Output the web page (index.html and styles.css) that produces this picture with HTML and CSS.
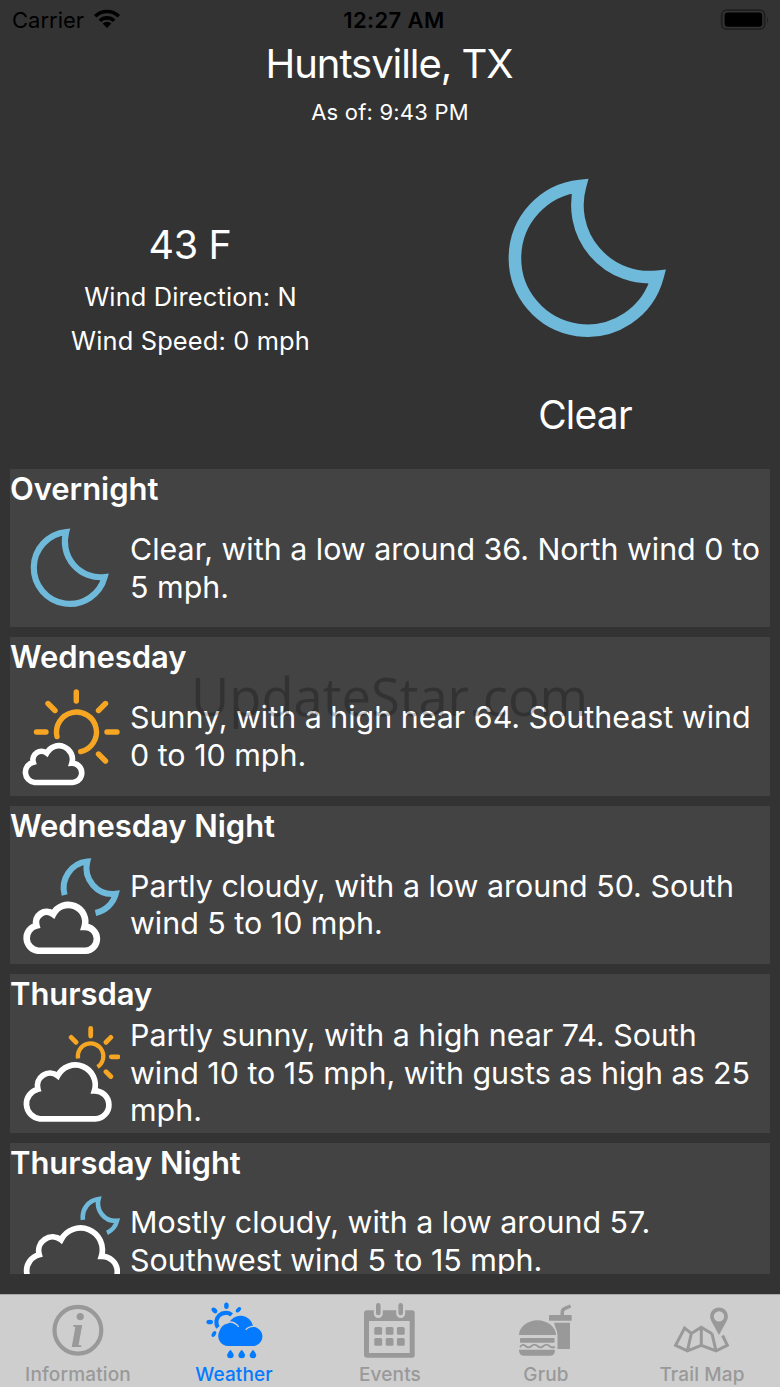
FILE: index.html
```html
<!DOCTYPE html>
<html lang="en">
<head>
  <meta charset="UTF-8" />
  <meta name="viewport" content="width=device-width, initial-scale=1.0" />
  <title>Weather - Huntsville, TX</title>
  <link rel="stylesheet" href="styles.css">
</head>
<body>
  <!-- shared shapes -->
  <svg class="defs" width="0" height="0">
    <defs>
      <path id="moon" d="M71.5 8 A72.5 72.5 0 1 0 149 98.7 A72 72 0 0 1 71.5 8 Z" />
      <path id="cloud" d="M19.5 94.5 A15 15 0 0 1 17.5 65 A12.6 12.6 0 0 1 37.3 51.5 A19.9 19.9 0 0 1 74 66.5 A14 14 0 0 1 75 94.5 Z" />
    </defs>
  </svg>

  <div class="screen">
    <header class="status-bar">
      <div class="carrier">
        <span class="carrier-name">Carrier</span>
        <svg class="wifi" width="28" height="20" viewBox="0 0 28 20">
          <path class="wifi-arc" d="M2.2 7.2 A17 17 0 0 1 25.8 7.2" />
          <path class="wifi-arc" d="M6.8 11.8 A10.4 10.4 0 0 1 21.2 11.8" />
          <path d="M14 19 L9.6 14.6 A6.4 6.4 0 0 1 18.4 14.6 Z" />
        </svg>
      </div>
      <div class="clock">12:27 AM</div>
      <svg class="battery" width="50" height="22" viewBox="0 0 50 22">
        <rect class="battery-case" x="1.7" y="1.2" width="43" height="19" rx="5" />
        <rect x="4.6" y="3.6" width="37.6" height="14.2" rx="3" />
        <path class="battery-tip" d="M47 7.5 Q49.4 10.8 47 14 Z" />
      </svg>
    </header>

    <section class="location">
      <h1>Huntsville, TX</h1>
      <p>As of: 9:43 PM</p>
    </section>

    <section class="current">
      <div class="conditions">
        <div class="temp">43 F</div>
        <div class="wind">Wind Direction: N</div>
        <div class="wind">Wind Speed: 0 mph</div>
      </div>
      <div class="sky">
        <svg class="moon" width="160" height="160" viewBox="-3.5 0 160 160">
          <use href="#moon" stroke-width="12.6" />
        </svg>
        <div class="sky-name">Clear</div>
      </div>
    </section>

    <main class="forecast">
      <article class="card">
        <h2>Overnight</h2>
        <div class="card-body">
          <svg class="icon moon" viewBox="0 0 100 105">
            <use href="#moon" transform="translate(10.6 9) scale(.497)" stroke-width="12.4" />
          </svg>
          <p>Clear, with a low around 36. North wind 0 to<br>5 mph.</p>
        </div>
      </article>

      <article class="card">
        <h2>Wednesday</h2>
        <div class="card-body">
          <svg class="icon" viewBox="0 0 100 105">
            <g class="sun" stroke-width="5.4">
              <path d="M37 49.6 A20 20 0 1 1 60.7 64.6" />
              <path d="M56.3 5V14 M16.5 45H26 M87 45H97 M28 16.5L35 23.5 M85.5 16.5L78.5 23.5 M78.5 67L85.5 74" />
            </g>
            <use class="cloud" href="#cloud" transform="translate(1.3 30.9) scale(.683)" stroke-width="8.2" />
          </svg>
          <p>Sunny, with a high near 64. Southeast wind<br>0 to 10 mph.</p>
        </div>
      </article>

      <article class="card">
        <h2>Wednesday Night</h2>
        <div class="card-body">
          <svg class="icon" viewBox="0 0 100 105">
            <path class="moon" stroke-width="6" d="M44.6 39 A26.5 26.5 0 0 1 67.3 5.6 A26 26 0 0 0 95.8 37.8 A26.5 26.5 0 0 1 75.5 57" />
            <use class="cloud" href="#cloud" transform="translate(1.5 14.2) scale(.852)" stroke-width="7.7" />
          </svg>
          <p>Partly cloudy, with a low around 50. South<br>wind 5 to 10 mph.</p>
        </div>
      </article>

      <article class="card">
        <h2>Thursday</h2>
        <div class="card-body">
          <svg class="icon" viewBox="0 0 100 105">
            <g class="sun butt" stroke-width="4.2">
              <path d="M58 34.5 A12.8 12.8 0 1 1 77.5 43" />
              <path class="ray" d="M70.7 4.5V12 M51.2 13.4L56 18.2 M90.8 13.4L86 18.2 M91.3 32.8H98 M86 47.7L90.8 52.5" />
            </g>
            <use class="cloud" href="#cloud" transform="translate(.4 .3)" stroke-width="5.7" />
          </svg>
          <p>Partly sunny, with a high near 74. South<br>wind 10 to 15 mph, with gusts as high as 25<br>mph.</p>
        </div>
      </article>

      <article class="card">
        <h2>Thursday Night</h2>
        <div class="card-body">
          <svg class="icon" viewBox="0 0 100 105">
            <path class="moon" stroke-width="4.6" d="M63 26.8 A18 18 0 0 1 78.6 6 A17.5 17.5 0 0 0 97 27.8 A18 18 0 0 1 87 39.8" />
            <use class="cloud" href="#cloud" transform="translate(0 -9.8) scale(1.1)" stroke-width="5.2" />
          </svg>
          <p>Mostly cloudy, with a low around 57.<br>Southwest wind 5 to 15 mph.</p>
        </div>
      </article>
    </main>

    <nav class="tab-bar">
      <a class="tab">
        <svg viewBox="0 0 60 60">
          <circle class="line" cx="29.9" cy="30.3" r="23.4" stroke-width="4.2" />
          <text class="info-i" x="22.5" y="46.7">i</text>
        </svg>
        <span>Information</span>
      </a>
      <a class="tab active">
        <svg viewBox="0.3 0 60 60">
          <path class="line" stroke-width="4.2" d="M14.2 27.5 A9.5 9.5 0 0 1 28 14.8" />
          <ellipse cx="22.7" cy="5.7" rx="2.3" ry="3.3" />
          <ellipse cx="10.7" cy="10.4" rx="2.3" ry="3.3" transform="rotate(-45 10.7 10.4)" />
          <ellipse cx="34.7" cy="9.8" rx="1.9" ry="3.2" transform="rotate(45 34.7 9.8)" />
          <ellipse cx="6" cy="22" rx="3.3" ry="2.3" />
          <ellipse cx="10.2" cy="34" rx="1.9" ry="3.2" transform="rotate(30 10.2 34)" />
          <path class="gap-line" d="M26 20 A13 13 0 0 1 49.5 25" stroke-width="3" />
          <path d="M25 23.5 A12.8 12.8 0 0 1 49.3 26 L46 36 H28 Z" />
          <path d="M24.5 46 A10 10 0 0 1 15.6 31.5 A11 11 0 0 1 34.8 27.5 L42 30 A9.6 9.6 0 1 1 48 46 Z" />
          <path class="gap-line" stroke-width="1.4" d="M14.8 30 A11.4 11.4 0 0 1 35 26.8 M42 29.8 A10.4 10.4 0 0 1 50.5 26.4" />
          <path d="M26.7 49.7 Q30 53.5 30 55 A3.3 3.3 0 0 1 23.4 55 Q23.4 53.5 26.7 49.7 Z" />
          <path d="M38 49.7 Q41.3 53.5 41.3 55 A3.3 3.3 0 0 1 34.7 55 Q34.7 53.5 38 49.7 Z" />
          <path d="M49.3 49.7 Q52.6 53.5 52.6 55 A3.3 3.3 0 0 1 46 55 Q46 53.5 49.3 49.7 Z" />
        </svg>
        <span>Weather</span>
      </a>
      <a class="tab">
        <svg viewBox="1 0 60 60">
          <path fill-rule="evenodd" d="M8 10.3H53Q55.7 10.3 55.7 13V55Q55.7 57.7 53 57.7H8Q5 57.7 5 55V13Q5 10.3 8 10.3Z M10 21V53H50.7V21Z" />
          <path class="gap-line round" stroke-width="9" d="M19.3 6V13.5 M41.7 6V13.5" />
          <path class="line round" stroke-width="4.6" d="M19.3 5.2V13 M41.7 5.2V13" />
          <rect x="15.3" y="27" width="7.8" height="7.8" rx="1.5" />
          <rect x="26.7" y="27" width="7.8" height="7.8" rx="1.5" />
          <rect x="37.9" y="27" width="7.8" height="7.8" rx="1.5" />
          <rect x="15.3" y="38" width="7.8" height="7.8" rx="1.5" />
          <rect x="26.7" y="38" width="7.8" height="7.8" rx="1.5" />
          <rect x="37.9" y="38" width="7.8" height="7.8" rx="1.5" />
        </svg>
        <span>Events</span>
      </a>
      <a class="tab">
        <svg viewBox="1 0 60 60">
          <path class="line" stroke-width="3.4" d="M47.2 16V12.5Q47.2 9.4 50 8.3L55.6 6" />
          <rect x="34" y="15" width="22.7" height="5.7" rx=".8" />
          <path d="M39 22.7H55V49H41.7V32Z" />
          <path class="gap-line" stroke-width="3" d="M4 35.5 C4 27 13 20.3 22.5 20.3 S41 27 41 35.5 V54" />
          <path d="M4 35 C4 27 13 20.3 22.5 20.3 S41 27 41 35 Z" />
          <rect x="5" y="38" width="34.6" height="4.8" rx="1" />
          <path class="line" stroke-width="1.8" d="M5 47.3 Q7.5 43.3 10.5 46 T16.5 46 T22.5 46 T28.5 46 T34.5 46 T39.8 46.5" />
          <path d="M4 49.8H40Q40 55.7 35.5 55.7H8.5Q4 55.7 4 49.8Z" />
        </svg>
        <span>Grub</span>
      </a>
      <a class="tab">
        <svg viewBox="1 0 60 60">
          <path class="line" stroke-width="3" d="M41 33.7L30.3 27.3L20.3 33.5L13.6 28L4.6 45.3L16.4 50.8L30.3 45.3L45 50.8L56.4 45.3L51.6 35.5 M20.3 33.5L16.4 50.8 M30.3 27.3V45.3 M41 33.7L45 50.8" />
          <path class="gap-line" stroke-width="2.5" d="M39.8 19L48 35.4L56.2 19" />
          <path fill-rule="evenodd" d="M48 35L40.3 20.9A8.9 8.9 0 1 1 55.7 20.9Z M48 11.2A5.2 5.2 0 1 0 48 21.6A5.2 5.2 0 1 0 48 11.2Z" />
        </svg>
        <span>Trail Map</span>
      </a>
    </nav>

    <div class="watermark">UpdateStar.com</div>
  </div>
</body>
</html>
```
FILE: styles.css
```css
* {
  box-sizing: border-box;
}
body {
  margin: 0;
  background: #333;
  font-family: Inter, 'Liberation Sans', sans-serif;
  color: #fff;
}
h1, h2, p {
  margin: 0;
  font-weight: 400;
}
.defs {
  position: absolute;
}
.screen {
  position: relative;
  width: 780px;
  height: 1387px;
  display: flex;
  flex-direction: column;
  overflow: hidden;
  white-space: nowrap;
}

/* status bar */
.status-bar {
  height: 40px;
  padding: 0 10px 0 12px;
  display: grid;
  grid-template-columns: 1fr auto 1fr;
  align-items: center;
  color: #000;
  font-size: 22px;
}
.carrier {
  display: flex;
  align-items: center;
  gap: 9px;
}
.wifi {
  margin-top: -2px;
}
.wifi-arc {
  fill: none;
  stroke: #000;
  stroke-width: 3.6;
}
.clock {
  padding-left: 6px;
  font-weight: 600;
  letter-spacing: 0.4px;
}
.battery {
  justify-self: end;
  margin-top: -1px;
}
.battery-case {
  fill: none;
  stroke: #202020;
  stroke-width: 1.8;
}
.battery-tip {
  fill: #202020;
}

/* current weather */
.location {
  height: 100px;
  text-align: center;
}
.location h1 {
  padding-right: 2px;
  font-size: 40px;
  line-height: 48px;
  letter-spacing: -1.05px;
}
.location p {
  margin-top: 11px;
  font-size: 22px;
  line-height: 27px;
  letter-spacing: 0.2px;
}
.current {
  height: 329px;
  display: grid;
  grid-template-columns: 380px 410px;
}
.conditions {
  padding-top: 81px;
  text-align: center;
}
.temp {
  font-size: 39.5px;
  line-height: 48px;
  letter-spacing: -0.3px;
}
.wind {
  margin-top: 12px;
  padding-left: 1px;
  font-size: 25.4px;
  line-height: 31.6px;
  letter-spacing: 0.15px;
}
.sky {
  display: flex;
  flex-direction: column;
  align-items: center;
  padding-top: 38px;
}
.sky-name {
  margin-top: 53px;
  font-size: 39px;
  line-height: 48px;
  letter-spacing: -0.8px;
}
.moon {
  fill: none;
  stroke: #6fbadb;
  stroke-miterlimit: 10;
  overflow: visible;
}
.sun {
  fill: none;
  stroke: #f6a623;
  stroke-linecap: round;
}
.sun.butt {
  stroke-linecap: butt;
}
.sun .ray {
  stroke-width: 4.8;
  stroke-linecap: round;
}
.cloud {
  fill: none;
  stroke: #fff;
}

/* forecast list */
.forecast {
  height: 805px;
  padding: 0 10px;
  display: flex;
  flex-direction: column;
  gap: 10px;
  overflow: hidden;
}
.card {
  flex: 0 0 158.4px;
  background: #434343;
}
.card h2 {
  height: 40px;
  font-size: 31px;
  font-weight: 600;
  line-height: 40px;
  letter-spacing: -0.05px;
}
.card-body {
  height: 118px;
  padding: 0 0 0 10px;
  display: flex;
  align-items: center;
  gap: 10px;
}
.icon {
  flex: none;
  align-self: flex-start;
  width: 100px;
  height: 105px;
  margin-top: 10px;
}
.card p {
  padding-top: 1px;
  font-size: 30.4px;
  line-height: 37.6px;
}

/* tab bar */
.tab-bar {
  height: 93px;
  margin-top: 20px;
  display: grid;
  grid-template-columns: repeat(5, 156px);
  background: #cecece;
  border-top: 1px solid #a8a8a8;
}
.tab {
  display: flex;
  flex-direction: column;
  align-items: center;
  padding-top: 5px;
  color: #999;
  font-size: 19px;
  font-weight: 500;
  line-height: 24px;
  letter-spacing: 0.15px;
}
.tab svg {
  width: 60px;
  height: 60px;
  fill: currentColor;
}
.tab span {
  margin-top: 3px;
}
.tab.active {
  color: #047bff;
}
.line {
  fill: none;
  stroke: currentColor;
}
.gap-line {
  fill: none;
  stroke: #cecece;
}
.round {
  stroke-linecap: round;
}
.info-i {
  font: italic bold 49px 'Liberation Serif', serif;
}

.watermark {
  position: absolute;
  top: 661px;
  left: 191px;
  font-family: 'Open Sans', 'Noto Sans', sans-serif;
  font-size: 52.5px;
  line-height: 70px;
  color: rgba(0, 0, 0, 0.25);
}
```
